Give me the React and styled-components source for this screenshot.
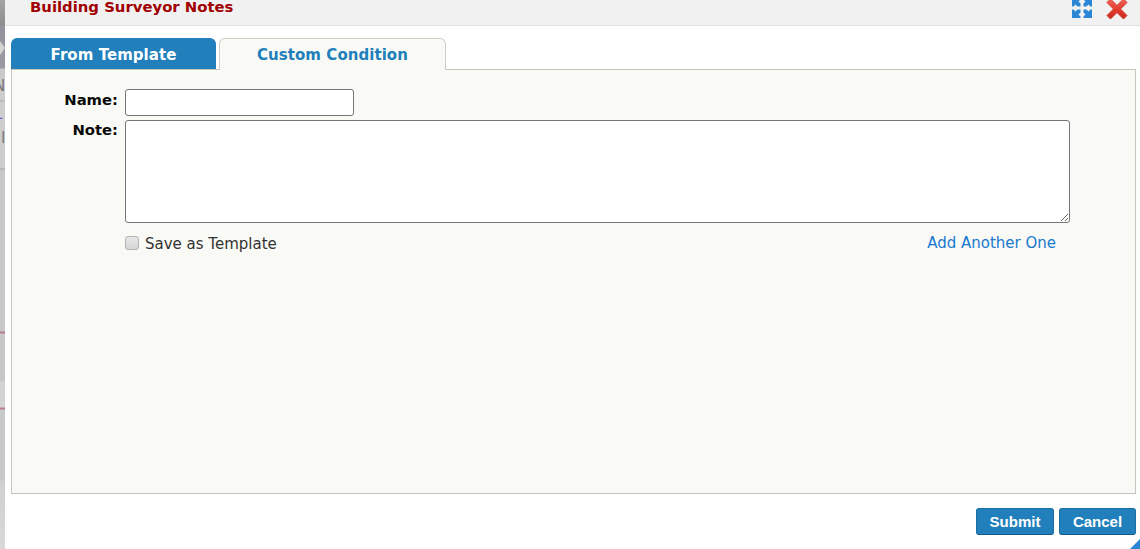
import React from "react";
import styled, { createGlobalStyle } from "styled-components";

const Global = createGlobalStyle`
  html, body { margin: 0; padding: 0; height: 100%; overflow: hidden; background: #fff; }
  #root { height: 549px; }
  * { box-sizing: border-box; }
`;
const Page = styled.div`
  display: flex; width: 1140px; height: 549px; font-family: "DejaVu Sans", Verdana, sans-serif; font-size: 14px; color: #111;
`;
const Backdrop = styled.div`
  position: relative; width: 5px; flex: none; overflow: hidden;
  background: linear-gradient(180deg,
    #a4a4a4 0, #8e8e8e 25px, #92929c 26px, #9a9aa4 68px, #c9c9c9 69px,
    #cdcdcd 100px, #a9a9a9 101px, #cdcdcd 102px,
    #cdcdcd 168px, #a5a5a5 169px, #c8c8c8 170px, #c8c8c8 331px, #b77d90 332px, #b77d90 333px, #c7c7c7 334px,
    #c7c7c7 380px, #d3d3d3 382px, #d3d3d3 407px, #b77d90 408px, #b77d90 409px, #c9c9c9 410px,
    #c9c9c9 480px, #d0d0d0 481px, #d8d8d8 549px);
`;
const Chevron = styled.span`
  position: absolute; left: -6px; top: 41px; width: 11px; height: 14px; background: #d4d4d4;
  clip-path: polygon(0 0, 55% 0, 100% 50%, 55% 100%, 0 100%);
`;
const Ghost = styled.span`
  position: absolute; left: ${p => p.$left || -6}px; font-size: 15px; line-height: 18px; color: ${p => p.$c || "#777"};
  top: ${p => p.$top}px;
`;
const Dialog = styled.div`
  flex: 1; display: flex; flex-direction: column; min-width: 0; background: #fff;
  position: relative;
`;
const Header = styled.div`
  height: 26px; flex: none; display: flex; align-items: flex-start; justify-content: space-between;
  background: #f1f1f1; border-bottom: 1px solid #e2e2e2; padding-left: 25px; overflow: hidden;
`;
const Title = styled.h1`
  margin: -1px 0 0; font-size: 14.85px; line-height: 17px; font-weight: 700; color: #a00000; font-family: "DejaVu Sans", Verdana, sans-serif;
`;
const HeaderIcons = styled.div`
  display: flex; gap: 14px; padding-right: 12px; margin-top: -2px; align-items: flex-start;
`;
const Body = styled.div`
  padding: 12px 4px 0 6px; display: flex; flex-direction: column; flex: 1; min-height: 0;
`;
const Tabs = styled.div`
  display: flex; gap: 3px; height: 31px; flex: none; align-items: flex-start; position: relative; z-index: 1;
`;
const Tab = styled.div`
  width: ${p => p.$w}px;
  height: ${p => (p.$active ? 32 : 31)}px;
  display: flex; align-items: center; justify-content: center; padding-top: ${p => (p.$active ? 0 : 2)}px;
  font-size: 15px; letter-spacing: 0.05px; font-weight: 700; border-radius: 6px 6px 0 0;
  color: ${p => (p.$active ? "#2180bb" : "#fff")};
  background: ${p => (p.$active ? "#f9faf5" : "#2180bb")};
  border: ${p => (p.$active ? "1px solid #cfcfc4" : "none")};
  border-bottom: none;
`;
const Panel = styled.div`
  height: 425px; flex: none; background: #f9faf5; border: 1px solid #c5c5bb; padding: 19px 66px 0 0;
`;
const Row = styled.div`
  display: grid; grid-template-columns: 106px 1fr; column-gap: 7px; align-items: start; margin-bottom: ${p => p.$mb || 0}px;
`;
const Label = styled.label`
  text-align: right; font-weight: 700; font-size: 14.8px; line-height: 18px; color: #0a0a0a; padding-top: ${p => p.$pt || 0}px;
`;
const NameInput = styled.input`
  display: block; width: 229px; height: 27px; background: #fff; border: 1px solid #767676; border-radius: 3px; padding: 0 4px; margin: 0;
`;
const NoteArea = styled.textarea`
  display: block; width: 945px; height: 103px; background: #fff; border: 1px solid #767676; border-radius: 3px; padding: 2px; margin: 0; resize: both;
`;
const Options = styled.div`
  margin: 11px 0 0 113px; display: flex; justify-content: space-between; align-items: flex-start; width: 931px;
`;
const CheckLabel = styled.label`
  display: flex; align-items: center; gap: 6px; font-size: 15px; line-height: 20px; color: #333;
`;
const Check = styled.span`
  width: 14px; height: 14px; border-radius: 3px; border: 1px solid #b5b5b5; background: linear-gradient(#e6e6e6, #d6d6d6); margin-top: -3px; flex: none;
`;
const AddLink = styled.a`
  color: #1878d0; font-size: 15px; line-height: 18px; text-decoration: none; margin-top: 0;
`;
const Footer = styled.div`
  display: flex; justify-content: flex-end; gap: 5px; padding: 14px 0 0 0;
`;
const Button = styled.button`
  height: 27px; width: ${p => p.$w}px; padding: 0; margin: 0; font-family: "Liberation Sans", Arial, sans-serif; font-size: 15px; font-weight: 700; color: #fff;
  background: #2180bb; border: 1px solid #1b6ea3; border-bottom-color: #15588a; border-radius: 3px;
`;
const Corner = styled.svg`
  position: absolute; right: 0; bottom: 0;
`;

const QUADRANT = "M0 0h8.5v1.5l-2 2 2 2v3h-3l-2-2-2 2H0z";
const ExpandIcon = () => (
  <svg width="20" height="20" viewBox="0 0 20 20">
    <g fill="#2b86d6">
      <path d={QUADRANT} />
      <path d={QUADRANT} transform="translate(20 0) scale(-1 1)" />
      <path d={QUADRANT} transform="translate(0 20) scale(1 -1)" />
      <path d={QUADRANT} transform="translate(20 20) scale(-1 -1)" />
    </g>
  </svg>
);
const CloseIcon = () => (
  <svg width="22" height="22" viewBox="0 0 22 22">
    <defs>
      <linearGradient id="closeGrad" x1="0" y1="0" x2="0" y2="1">
        <stop offset="0" stopColor="#f0685c" />
        <stop offset="0.55" stopColor="#e2382a" />
        <stop offset="1" stopColor="#c62a20" />
      </linearGradient>
    </defs>
    <path d="M1 4.5 4.5 1 11 7.5 17.5 1 21 4.5 14.5 11 21 17.5 17.5 21 11 14.5 4.5 21 1 17.5 7.5 11z" fill="url(#closeGrad)" stroke="#d8362a" strokeWidth="1" strokeLinejoin="round" />
  </svg>
);

export default function App() {
  return (
    <Page>
      <Global />
      <Backdrop>
        <Chevron />
        <Ghost $top={77}>N</Ghost>
        <Ghost $top={105} $c="#6a5acd">L</Ghost>
        <Ghost $top={129} $left={1}>I</Ghost>
      </Backdrop>
      <Dialog>
        <Header>
          <Title>Building Surveyor Notes</Title>
          <HeaderIcons>
            <ExpandIcon />
            <CloseIcon />
          </HeaderIcons>
        </Header>
        <Body>
          <Tabs>
            <Tab $w={205}>From Template</Tab>
            <Tab $w={227} $active>Custom Condition</Tab>
          </Tabs>
          <Panel>
            <Row $mb={4}>
              <Label $pt={2}>Name:</Label>
              <NameInput />
            </Row>
            <Row>
              <Label $pt={1}>Note:</Label>
              <NoteArea />
            </Row>
            <Options>
              <CheckLabel><Check />Save as Template</CheckLabel>
              <AddLink href="#">Add Another One</AddLink>
            </Options>
          </Panel>
          <Footer>
            <Button $w={78}>Submit</Button>
            <Button $w={77}>Cancel</Button>
          </Footer>
        </Body>
        <Corner width="10" height="10" viewBox="0 0 10 10"><path d="M10 0V10H0z" fill="#2b86d6" /></Corner>
      </Dialog>
    </Page>
  );
}
